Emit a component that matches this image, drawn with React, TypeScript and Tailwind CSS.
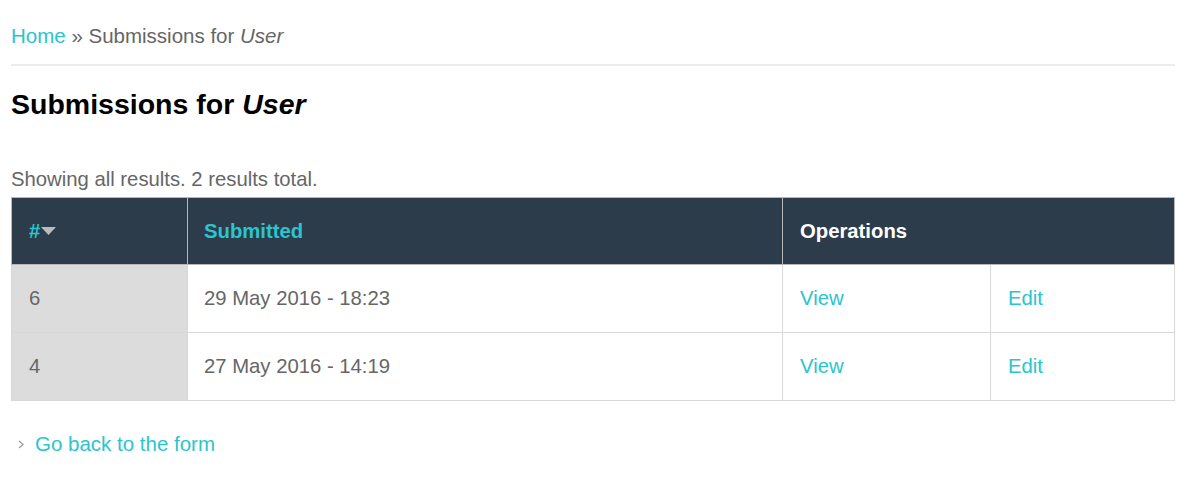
import React from "react";

const rows = [
  { id: "6", date: "29 May 2016 - 18:23" },
  { id: "4", date: "27 May 2016 - 14:19" },
];

export default function App() {
  return (
    <div
      className="bg-white pl-[11px] pr-[25px] pt-[22px] text-[#666666]"
      style={{ fontFamily: '"Liberation Sans", Arial, sans-serif' }}
    >
      <div className="text-[20.5px] leading-[28px]">
        <a className="text-[#2bc4cf]">Home</a>
        <span> » Submissions for </span>
        <em>User</em>
      </div>
      <div className="mt-[14px] h-[2px] bg-[#ececec]" />
      <h1 className="mt-[22px] text-[28.5px] font-bold leading-[32px] text-black">
        Submissions for <em>User</em>
      </h1>
      <div className="mt-[47px] text-[20.3px] leading-[24px]">
        Showing all results. 2 results total.
      </div>
      <table className="mt-[6px] w-full table-fixed border-collapse border border-[#cfcfcf] text-[20.3px]">
        <colgroup>
          <col className="w-[176px]" />
          <col className="w-[595px]" />
          <col className="w-[208px]" />
          <col />
        </colgroup>
        <thead>
          <tr className="h-[67px] bg-[#2d3c4a]">
            <th className="border border-[#b5b9bd] pl-[17px] text-left font-bold text-[#2bc4cf]">
              <span className="inline-flex items-center">
                #
                <svg width="15" height="8" viewBox="0 0 15 8" className="ml-[1px]">
                  <polygon points="0,0 15,0 7.5,8" fill="#b8bcc0" />
                </svg>
              </span>
            </th>
            <th className="border border-[#b5b9bd] pl-[16px] text-left font-bold text-[#2bc4cf]">
              Submitted
            </th>
            <th colSpan={2} className="border border-[#b5b9bd] pl-[17px] text-left font-bold text-white">
              Operations
            </th>
          </tr>
        </thead>
        <tbody>
          {rows.map((r) => (
            <tr key={r.id} className="h-[68px]">
              <td className="border border-[#d8d8d8] bg-[#dcdcdc] pl-[17px]">{r.id}</td>
              <td className="border border-[#d8d8d8] pl-[16px]">{r.date}</td>
              <td className="border border-[#d8d8d8] pl-[17px] text-[#2bc4cf]">View</td>
              <td className="border border-[#d8d8d8] pl-[17px] text-[#2bc4cf]">Edit</td>
            </tr>
          ))}
        </tbody>
      </table>
      <div className="mt-[30px] flex items-center text-[20.5px] leading-[26px]">
        <svg width="6" height="9" viewBox="0 0 6 9" className="ml-[7px] mr-[11px]">
          <polyline points="1,1 5,4.5 1,8" fill="none" stroke="#999" strokeWidth="1.2" />
        </svg>
        <a className="text-[#2bc4cf]">Go back to the form</a>
      </div>
    </div>
  );
}
